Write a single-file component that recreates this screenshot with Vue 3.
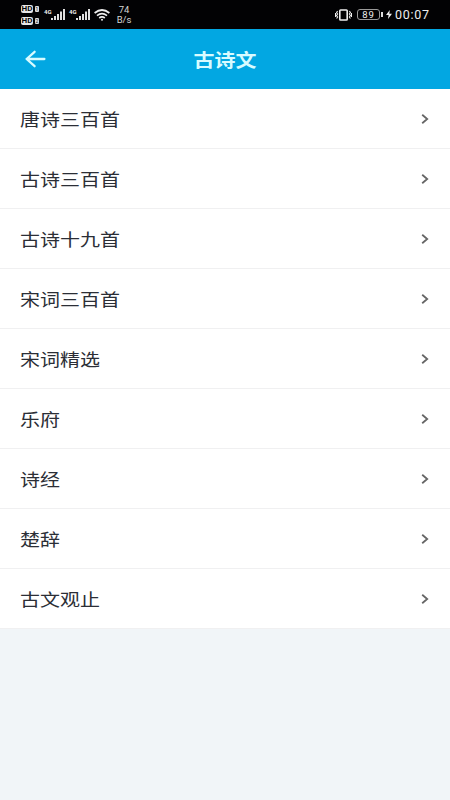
<script setup>
const collections = [
  '唐诗三百首',
  '古诗三百首',
  '古诗十九首',
  '宋词三百首',
  '宋词精选',
  '乐府',
  '诗经',
  '楚辞',
  '古文观止',
]
</script>

<template>
  <div class="screen">
    <div class="status">
      <div class="hd-group">
        <div v-for="n in 2" :key="n" class="hd-row">
          <span class="hd">HD</span><span class="sim">{{ n }}</span>
        </div>
      </div>
      <div v-for="n in 2" :key="'s' + n" class="signal">
        <span class="net">4G</span>
        <svg width="14" height="11" viewBox="0 0 14 11" fill="#e0e0e0">
          <rect x="0" y="9" width="2" height="2" />
          <rect x="3" y="7" width="2" height="4" />
          <rect x="6" y="5" width="2" height="6" />
          <rect x="9" y="2.5" width="2" height="8.5" />
          <rect x="12" y="0" width="2" height="11" />
        </svg>
      </div>
      <svg class="wifi" width="16" height="12" viewBox="0 0 16 12" fill="none" stroke="#eee" stroke-width="1.7">
        <path d="M.6 4Q8-2 15.4 4M3 6.6Q8 2.6 13 6.6M5.2 9Q8 6.8 10.8 9" />
        <circle cx="8" cy="10.8" r="1" fill="#eee" stroke="none" />
      </svg>
      <div class="speed"><span>74</span><span>B/s</span></div>
      <svg class="vibrate" width="17" height="12" viewBox="0 0 17 12" fill="none" stroke="#eee">
        <rect x="4.8" y="1" width="7.4" height="10" rx=".8" stroke-width="1.6" />
        <path d="M2.6 2L1.6 3.5L2.6 5L1.6 6.5L2.6 8L1.6 9.5M.5 4V8M14.4 2L15.4 3.5L14.4 5L15.4 6.5L14.4 8L15.4 9.5M16.5 4V8" stroke-width="1.1" />
      </svg>
      <div class="battery">89</div>
      <div class="battery-tip"></div>
      <svg class="bolt" width="6" height="9" viewBox="0 0 6 9" fill="#f2f2f2">
        <path d="M3.8 0L0 5H2.6L2 9L6 3.8H3.3Z" />
      </svg>
      <span class="clock">00:07</span>
    </div>
    <header class="header">
      <svg class="back" width="22" height="18" viewBox="0 0 22 18" fill="none" stroke="#d8fbff" stroke-width="2.3" stroke-linecap="round" stroke-linejoin="round">
        <path d="M20.4 9H2.6M10.6 1.8L2.6 9L10.6 16.2" />
      </svg>
      <h1 class="title">古诗文</h1>
    </header>
    <ul class="list">
      <li v-for="name in collections" :key="name" class="row">
        <span class="name">{{ name }}</span>
        <svg width="8" height="10" viewBox="0 0 8 10" fill="none" stroke="#666" stroke-width="1.8">
          <path d="M1.2 .8L6.2 5L1.2 9.2" />
        </svg>
      </li>
    </ul>
  </div>
</template>

<style>
body {
  margin: 0;
  background: #f1f5f8;
}
</style>

<style scoped>
.screen {
  width: 450px;
  height: 800px;
  overflow: hidden;
  background: #f1f5f8;
  font-family: Roboto, "Noto Sans CJK SC", sans-serif;
}
.status {
  box-sizing: border-box;
  height: 29px;
  padding: 0 20px 0 21px;
  display: flex;
  align-items: center;
  background: #020204;
  color: #eee;
}
.hd-group {
  display: flex;
  flex-direction: column;
  gap: 4px;
  width: 23px;
}
.hd-row {
  display: flex;
  align-items: center;
  gap: 2px;
}
.hd {
  width: 12px;
  height: 8px;
  border-radius: 2px;
  background: #e8e8e8;
  color: #080808;
  font-size: 8px;
  font-weight: 700;
  line-height: 8px;
  text-align: center;
}
.sim {
  width: 4px;
  height: 6px;
  border-radius: 1px;
  background: #ddd;
  color: #111;
  font-size: 5px;
  line-height: 6px;
  text-align: center;
}
.signal {
  display: flex;
  width: 25px;
}
.net {
  width: 7px;
  font-size: 6px;
  font-weight: 700;
  line-height: 5px;
}
.speed {
  width: 20px;
  margin-left: 4px;
  display: flex;
  flex-direction: column;
  align-items: center;
  font-size: 9.5px;
  line-height: 10px;
  color: #d4d4d4;
}
.vibrate {
  margin-left: auto;
}
.battery {
  box-sizing: border-box;
  width: 23px;
  height: 11px;
  margin-left: 5px;
  border: 1px solid #999;
  border-radius: 3px;
  font-size: 9.5px;
  line-height: 10px;
  letter-spacing: 0.8px;
  text-align: center;
}
.battery-tip {
  width: 2px;
  height: 5px;
  margin-left: 1px;
  background: #ddd;
}
.bolt {
  margin: 0 3px 0 3px;
}
.clock {
  width: 35px;
  font-size: 12.5px;
  line-height: 28px;
  letter-spacing: 0.7px;
  white-space: nowrap;
}
.header {
  height: 60px;
  box-sizing: border-box;
  padding: 0 24px;
  display: grid;
  grid-template-columns: 22px 1fr 22px;
  align-items: center;
  background: #02a7e2;
}
.title {
  margin: 0;
  padding-top: 3px;
  font-size: 21px;
  font-weight: 700;
  line-height: 30px;
  color: #d8fbff;
  text-align: center;
  transform: scaleY(0.87);
}
.list {
  margin: 0;
  padding: 0;
  list-style: none;
}
.row {
  box-sizing: border-box;
  height: 60px;
  padding: 0 21px 0 20px;
  display: flex;
  align-items: center;
  justify-content: space-between;
  background: #fff;
  border-bottom: 1px solid #f0f0f1;
}
.name {
  padding-top: 2px;
  font-size: 20px;
  line-height: 30px;
  color: #2b2e36;
  transform: scaleY(0.87);
}
</style>
